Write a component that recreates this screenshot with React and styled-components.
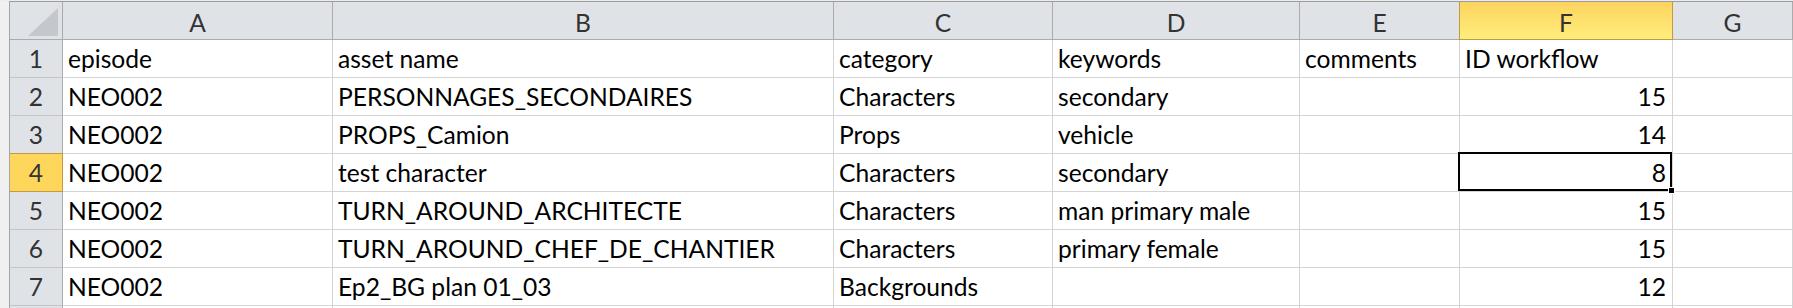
import React from 'react'
import styled, { createGlobalStyle, css } from 'styled-components'

const GlobalStyle = createGlobalStyle`
    html, body {
        margin: 0;
        padding: 0;
        background: #ffffff;
    }
    body {
        font-family: Lato, "Open Sans", "Liberation Sans", sans-serif;
        overflow: hidden;
    }
`

const Window = styled.div`
    display: flex;
    width: 1793px;
    height: 308px;
    overflow: hidden;
    box-sizing: border-box;
    border-top: 1px solid #ececec;
`

const Strip = styled.div`
    width: 9px;
    flex: none;
    background: #f0f0f0;
    border-right: 1px solid #a5a5a5;
`

const Sheet = styled.div`
    flex: 1;
    display: grid;
    grid-template-columns: 53px 270px 501px 219px 247px 160px 213px 1fr;
    grid-auto-rows: 38px;
    border-top: 1px solid #9c9c9c;
    align-content: start;
`

const HeadBase = css`
    box-sizing: border-box;
    display: flex;
    align-items: center;
    justify-content: center;
    background: #dfe3e8;
    color: #333333;
    font-size: 24.6px;
    line-height: 29px;
    border-right: 1px solid #ababab;
    border-bottom: 1px solid #ababab;
`

const Corner = styled.div`
    ${HeadBase};
    position: relative;
    svg {
        position: absolute;
        right: 4px;
        bottom: 3px;
    }
`

const ColHead = styled.div`
    ${HeadBase};
    padding-top: 4px;
    ${props => props.$active && css`
        background: linear-gradient(#fdd35e, #ffee7c);
        border-right-color: #c39a44;
        border-bottom-color: #c39a44;
        box-shadow: -1px 0 0 #c39a44;
    `}
`

const RowHead = styled.div`
    ${HeadBase};
    align-items: flex-end;
    padding-bottom: 4px;
    border-bottom-color: #c5c5c5;
    ${props => props.$active && css`
        background: #ffd65c;
        border-right-color: #c39a44;
        border-bottom-color: #c39a44;
        box-shadow: 0 -1px 0 #c39a44;
    `}
`

const Cell = styled.div`
    box-sizing: border-box;
    position: relative;
    display: flex;
    align-items: flex-end;
    justify-content: ${props => (props.$num ? 'flex-end' : 'flex-start')};
    padding: 0 6px 4px 5px;
    font-size: 24.6px;
    line-height: 29px;
    color: #000000;
    white-space: nowrap;
    overflow: ${props => (props.$selected ? 'visible' : 'hidden')};
    border-right: 1px solid #d4d4d4;
    border-bottom: 1px solid #d4d4d4;
`

const Selection = styled.div`
    position: absolute;
    left: -2px;
    top: -2px;
    right: 0;
    bottom: 0;
    border: 2px solid #000000;
    z-index: 2;
    pointer-events: none;

    &::after {
        content: '';
        position: absolute;
        right: -5px;
        bottom: -5px;
        width: 7px;
        height: 7px;
        box-sizing: border-box;
        background: #000000;
        border: 1px solid #ffffff;
    }
`

const columns = ['A', 'B', 'C', 'D', 'E', 'F', 'G']

const rows = [
    ['episode', 'asset name', 'category', 'keywords', 'comments', 'ID workflow', ''],
    ['NEO002', 'PERSONNAGES_SECONDAIRES', 'Characters', 'secondary', '', 15, ''],
    ['NEO002', 'PROPS_Camion', 'Props', 'vehicle', '', 14, ''],
    ['NEO002', 'test character', 'Characters', 'secondary', '', 8, ''],
    ['NEO002', 'TURN_AROUND_ARCHITECTE', 'Characters', 'man primary male', '', 15, ''],
    ['NEO002', 'TURN_AROUND_CHEF_DE_CHANTIER', 'Characters', 'primary female', '', 15, ''],
    ['NEO002', 'Ep2_BG plan 01_03', 'Backgrounds', '', '', 12, ''],
]

// only a sliver of row 8 peeks out at the bottom of the window
const blankRow = ['', '', '', '', '', '', '']

const selected = { row: 3, col: 5 }

const App = () => {
    return (
        <>
            <GlobalStyle />
            <Window>
                <Strip />
                <Sheet>
                    <Corner>
                        <svg width="30" height="28" viewBox="0 0 30 28">
                            <polygon points="30,0 30,28 0,28" fill="#c4c7cb" />
                        </svg>
                    </Corner>
                    {columns.map((c, i) => (
                        <ColHead key={c} $active={i === selected.col}>{c}</ColHead>
                    ))}
                    {rows.map((row, r) => (
                        <React.Fragment key={r}>
                            <RowHead $active={r === selected.row}>{r + 1}</RowHead>
                            {row.map((value, c) => {
                                const isSel = r === selected.row && c === selected.col
                                return (
                                    <Cell key={c} $num={typeof value === 'number'} $selected={isSel}>
                                        {value}
                                        {isSel && <Selection />}
                                    </Cell>
                                )
                            })}
                        </React.Fragment>
                    ))}
                    <RowHead />
                    {blankRow.map((_, c) => (
                        <Cell key={'b' + c} />
                    ))}
                </Sheet>
            </Window>
        </>
    )
}

export default App
